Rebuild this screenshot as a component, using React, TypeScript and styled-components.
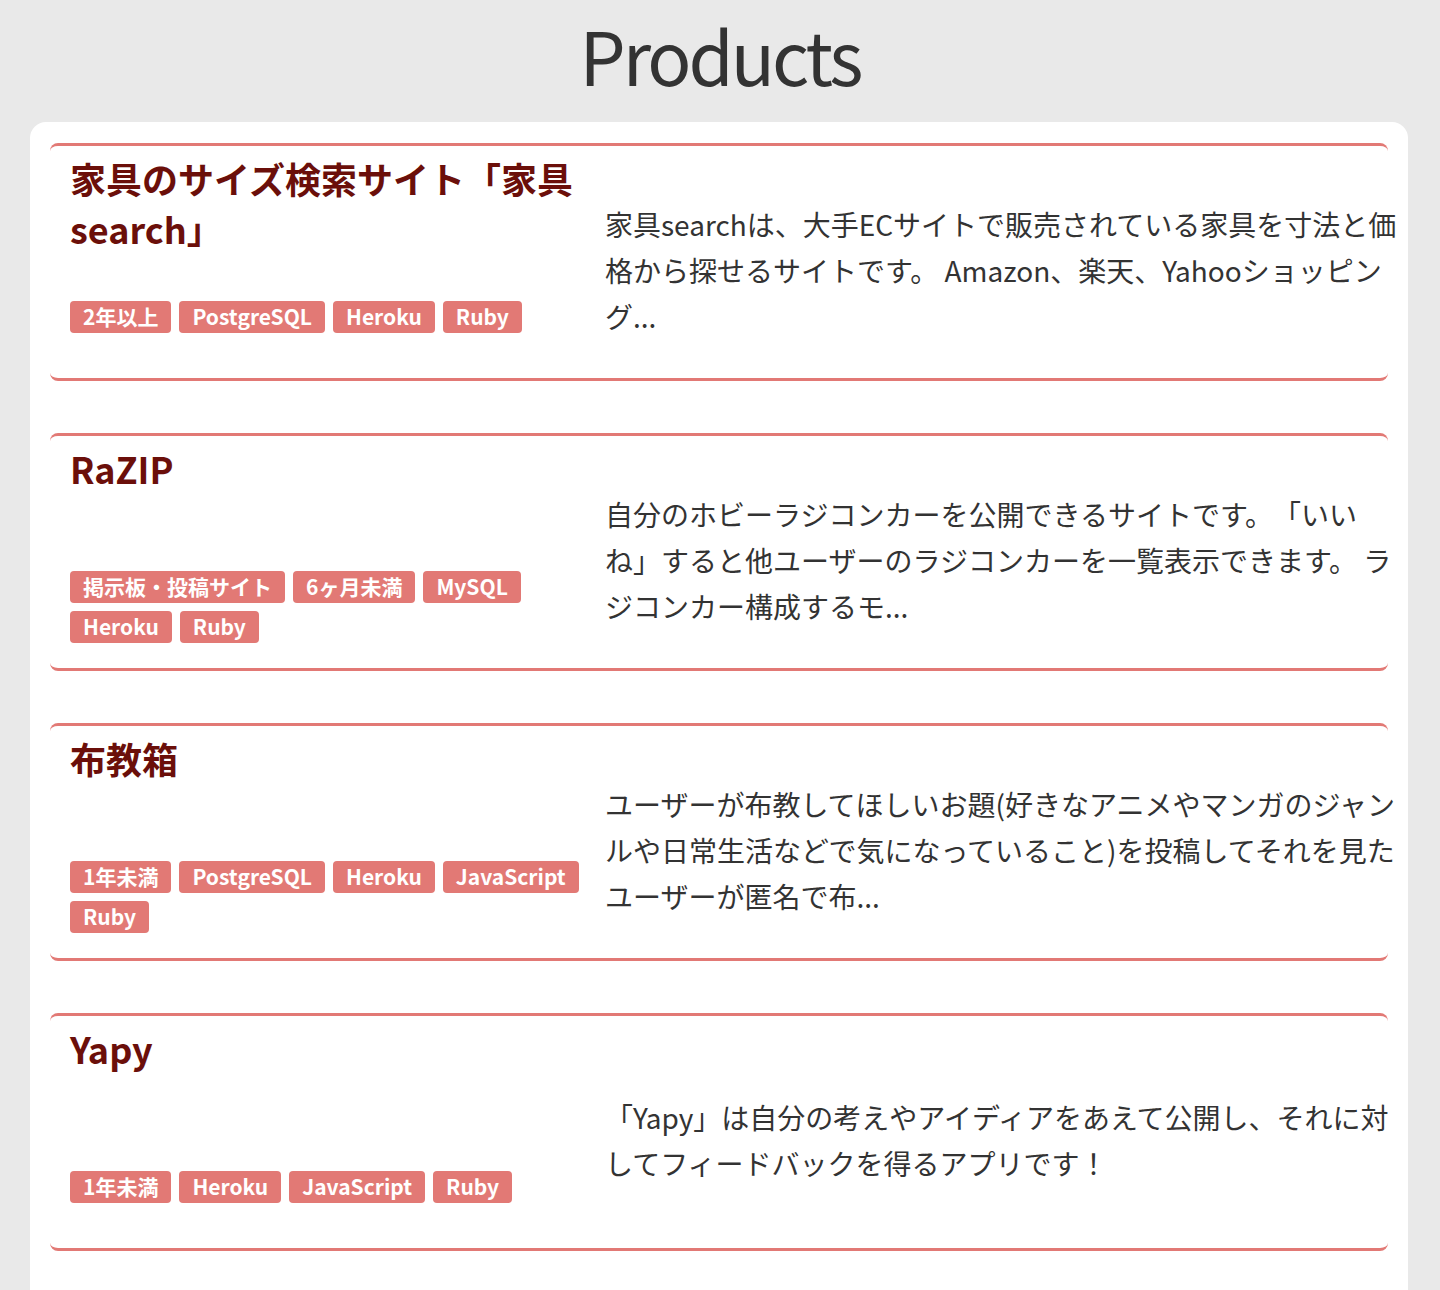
import styled, { createGlobalStyle } from 'styled-components';

const GlobalStyle = createGlobalStyle`
  html, body {
    margin: 0;
    padding: 0;
    background-color: #e9e9e9;
  }
  body {
    font-family: "Noto Sans CJK JP", "Noto Sans", sans-serif;
    color: #333;
    text-spacing-trim: space-all;
  }
`;

const Page = styled.main`
  min-height: 1290px;
  padding-top: 1px;
`;

const Heading = styled.h1`
  margin: 0;
  height: 121px;
  text-align: center;
  font-size: 73px;
  line-height: 107px;
  font-weight: 400;
  letter-spacing: -3px;
  color: #333;
`;

const Panel = styled.section`
  margin: 0 32px 0 30px;
  padding: 21px 20px 52px;
  background: #fff;
  border-radius: 16px 16px 0 0;
  display: flex;
  flex-direction: column;
  gap: 52px;
`;

const Item = styled.article`
  display: grid;
  grid-template-columns: 520px 795px;
  column-gap: 15px;
  height: 238px;
  box-sizing: border-box;
  padding: 7px 0 0 20px;
  border-top: 3px solid #e27975;
  border-bottom: 3px solid #e27975;
  border-radius: 8px;
`;

const Side = styled.div`
  display: flex;
  flex-direction: column;
  min-height: 0;
`;

const Title = styled.h2`
  margin: 0;
  height: 102px;
  font-size: 36px;
  line-height: 50px;
  font-weight: 700;
  color: #6b0f0a;
`;

const Tags = styled.ul`
  flex: 1;
  margin: 0;
  padding: 0;
  list-style: none;
  display: flex;
  flex-wrap: wrap;
  align-content: center;
  gap: 8px;
`;

const Tag = styled.li`
  height: 32px;
  padding: 0 13px;
  border-radius: 4px;
  background: #e27975;
  color: #fff;
  font-size: 21px;
  line-height: 31px;
  font-weight: 700;
  white-space: nowrap;
`;

const Description = styled.p`
  align-self: center;
  margin: 8px 0 0;
  font-size: 28px;
  line-height: 46px;
  color: #333;
`;

type Product = {
  title: string;
  tags: string[];
  description: string;
};

const products: Product[] = [
  {
    title: '家具のサイズ検索サイト「家具search」',
    tags: ['2年以上', 'PostgreSQL', 'Heroku', 'Ruby'],
    description:
      '家具searchは、大手ECサイトで販売されている家具を寸法と価格から探せるサイトです。 Amazon、楽天、Yahooショッピング...',
  },
  {
    title: 'RaZIP',
    tags: ['掲示板・投稿サイト', '6ヶ月未満', 'MySQL', 'Heroku', 'Ruby'],
    description:
      '自分のホビーラジコンカーを公開できるサイトです。「いいね」すると他ユーザーのラジコンカーを一覧表示できます。 ラジコンカー構成するモ...',
  },
  {
    title: '布教箱',
    tags: ['1年未満', 'PostgreSQL', 'Heroku', 'JavaScript', 'Ruby'],
    description:
      'ユーザーが布教してほしいお題(好きなアニメやマンガのジャンルや日常生活などで気になっていること)を投稿してそれを見たユーザーが匿名で布...',
  },
  {
    title: 'Yapy',
    tags: ['1年未満', 'Heroku', 'JavaScript', 'Ruby'],
    description:
      '「Yapy」は自分の考えやアイディアをあえて公開し、それに対してフィードバックを得るアプリです！',
  },
];

export default function App() {
  return (
    <Page>
      <GlobalStyle />
      <Heading>Products</Heading>
      <Panel>
        {products.map((p) => (
          <Item key={p.title}>
            <Side>
              <Title>{p.title}</Title>
              <Tags>
                {p.tags.map((t) => (
                  <Tag key={t}>{t}</Tag>
                ))}
              </Tags>
            </Side>
            <Description>{p.description}</Description>
          </Item>
        ))}
      </Panel>
    </Page>
  );
}
